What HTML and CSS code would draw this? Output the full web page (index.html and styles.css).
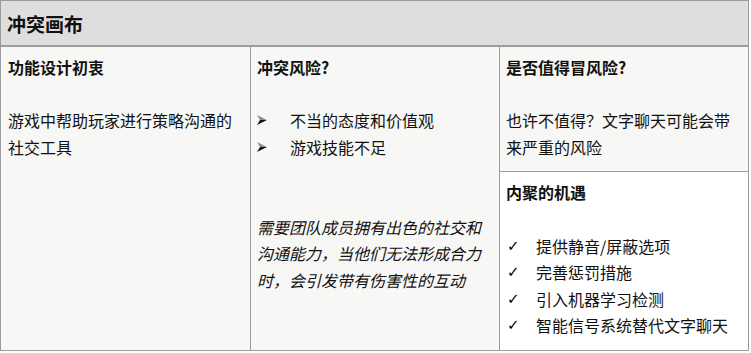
FILE: index.html
```html
<!DOCTYPE html>
<html lang="zh">
<head>
<meta charset="utf-8">
<link rel="stylesheet" href="styles.css">
</head>
<body>
<div class="canvas">
  <div class="title">冲突画布</div>
  <div class="cols">
    <div class="col cell">
      <h2>功能设计初衷</h2>
      <p>游戏中帮助玩家进行策略沟通的社交工具</p>
    </div>
    <div class="col cell">
      <h2>冲突风险?</h2>
      <ul class="arrows">
        <li><svg class="arrow" viewBox="0 0 10 10" width="10" height="10"><polygon points="0,0 10,5 3,5" fill="#8a8fa0"/><polygon points="0,10 10,5 3,5" fill="#111"/></svg><span>不当的态度和价值观</span></li>
        <li><svg class="arrow" viewBox="0 0 10 10" width="10" height="10"><polygon points="0,0 10,5 3,5" fill="#8a8fa0"/><polygon points="0,10 10,5 3,5" fill="#111"/></svg><span>游戏技能不足</span></li>
      </ul>
      <p class="note">需要团队成员拥有出色的社交和沟通能力，当他们无法形成合力时，会引发带有伤害性的互动</p>
    </div>
    <div class="col stack">
      <div class="cell top">
        <h2>是否值得冒风险?</h2>
        <p>也许不值得？文字聊天可能会带来严重的风险</p>
      </div>
      <div class="cell bottom">
        <h2>内聚的机遇</h2>
        <ul class="checks">
          <li><span class="tick">✓</span><span>提供静音/屏蔽选项</span></li>
          <li><span class="tick">✓</span><span>完善惩罚措施</span></li>
          <li><span class="tick">✓</span><span>引入机器学习检测</span></li>
          <li><span class="tick">✓</span><span>智能信号系统替代文字聊天</span></li>
        </ul>
      </div>
    </div>
  </div>
</div>
</body>
</html>
```
FILE: styles.css
```css
html, body {
  margin: 0;
  padding: 0;
  background: #ffffff;
}
body {
  font-family: "Noto Sans CJK SC", "Noto Sans", sans-serif;
  color: #111;
  font-size: 16px;
  line-height: 26.6px;
}
.canvas {
  width: 749px;
  border: 1px solid #9c9c9c;
  box-sizing: border-box;
}
.title {
  height: 46px;
  box-sizing: border-box;
  background: #dedede;
  border-bottom: 2px solid #9c9c9c;
  font-size: 19px;
  font-weight: bold;
  line-height: 46px;
  padding-left: 6px;
}
.cols {
  display: grid;
  grid-template-columns: 249px 249px 1fr;
}
.col {
  background: #f7f7f5;
}
.col + .col {
  border-left: 1px solid #9c9c9c;
}
.cell {
  padding: 7px 6px 11px 6px;
}
.col:first-child {
  padding-left: 7px;
}
h2 {
  margin: 0 0 26.6px 0;
  font-size: 16px;
  font-weight: bold;
}
p {
  margin: 0;
}
ul {
  list-style: none;
  margin: 0;
  padding: 0;
}
.arrows li, .checks li {
  display: flex;
  align-items: center;
}
.arrow {
  margin-left: 0;
  margin-right: 23px;
  flex: none;
}
.note {
  margin-top: 53.2px;
  font-style: italic;
}
.stack {
  display: flex;
  flex-direction: column;
  padding: 0;
}
.stack .top {
  padding-left: 6px;
}
.stack .bottom {
  border-top: 1px solid #9c9c9c;
  background: #ffffff;
  flex: 1;
  padding-left: 6px;
}
.tick {
  font-family: "DejaVu Sans", sans-serif;
  font-size: 15px;
  font-weight: bold;
  color: #000;
  width: 29px;
  padding-left: 1px;
  flex: none;
}
```
